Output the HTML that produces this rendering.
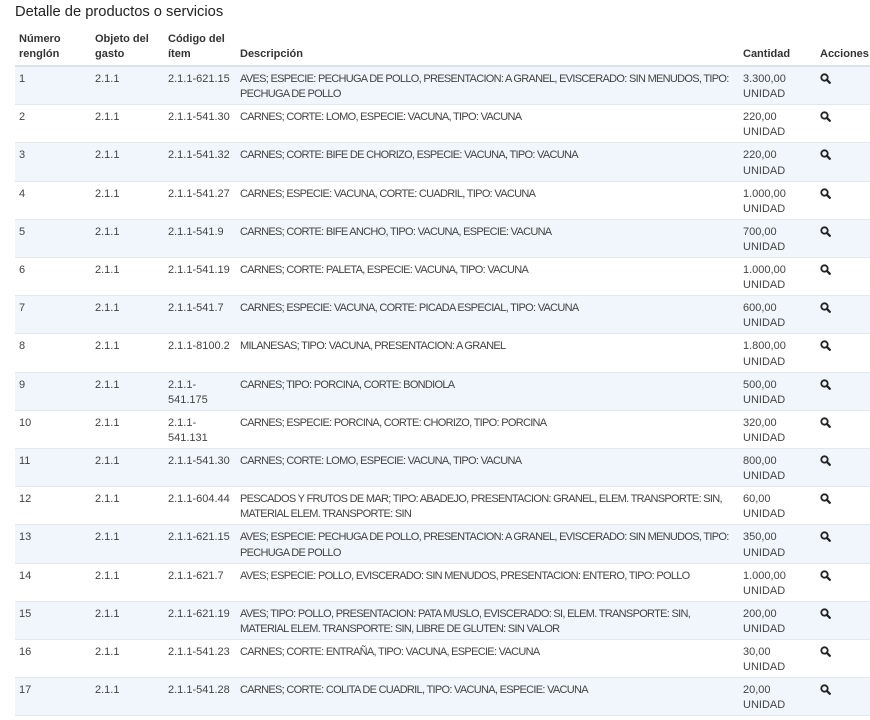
<!DOCTYPE html>
<html><head><meta charset="utf-8"><style>
body{margin:0;background:#fff;font-family:"Liberation Sans",sans-serif;color:#333;width:870px;height:720px;overflow:hidden;position:relative}
h1{position:absolute;left:15px;top:4px;margin:0;font-size:14.7px;font-weight:normal;color:#222}
.hd{position:absolute;top:32px;font-size:11px;font-weight:bold;line-height:15px;color:#333}
.hl{position:absolute;left:15px;width:855px;top:65px;height:2px;background:#dde3ea}
.r{position:absolute;left:15px;width:855px;height:38.2px;box-sizing:border-box;border-bottom:1px solid #e3e8ee;font-size:11px;line-height:15.3px;color:#444}
.r.o{background:#f0f6fb}
.r div{position:absolute;top:5px;white-space:nowrap}
.c1{left:4px}.c2{left:80px}.c3{left:153px}.c4{left:225px;letter-spacing:-0.7px}.c5{left:728px}.c6{left:805px;top:6px!important}
</style></head><body>
<h1>Detalle de productos o servicios</h1>
<div class="hd" style="left:19px">Número<br>renglón</div>
<div class="hd" style="left:95px">Objeto del<br>gasto</div>
<div class="hd" style="left:168px">Código del<br>ítem</div>
<div class="hd" style="left:240px;top:47px">Descripción</div>
<div class="hd" style="left:743px;top:47px">Cantidad</div>
<div class="hd" style="left:820px;top:47px">Acciones</div>
<div class="hl"></div>
<div id="rows"></div>
<script>
var d=[
["1","2.1.1-621.15","AVES; ESPECIE: PECHUGA DE POLLO, PRESENTACION: A GRANEL, EVISCERADO: SIN MENUDOS, TIPO:<br>PECHUGA DE POLLO","3.300,00"],
["2","2.1.1-541.30","CARNES; CORTE: LOMO, ESPECIE: VACUNA, TIPO: VACUNA","220,00"],
["3","2.1.1-541.32","CARNES; CORTE: BIFE DE CHORIZO, ESPECIE: VACUNA, TIPO: VACUNA","220,00"],
["4","2.1.1-541.27","CARNES; ESPECIE: VACUNA, CORTE: CUADRIL, TIPO: VACUNA","1.000,00"],
["5","2.1.1-541.9","CARNES; CORTE: BIFE ANCHO, TIPO: VACUNA, ESPECIE: VACUNA","700,00"],
["6","2.1.1-541.19","CARNES; CORTE: PALETA, ESPECIE: VACUNA, TIPO: VACUNA","1.000,00"],
["7","2.1.1-541.7","CARNES; ESPECIE: VACUNA, CORTE: PICADA ESPECIAL, TIPO: VACUNA","600,00"],
["8","2.1.1-8100.2","MILANESAS; TIPO: VACUNA, PRESENTACION: A GRANEL","1.800,00"],
["9","2.1.1-<br>541.175","CARNES; TIPO: PORCINA, CORTE: BONDIOLA","500,00"],
["10","2.1.1-<br>541.131","CARNES; ESPECIE: PORCINA, CORTE: CHORIZO, TIPO: PORCINA","320,00"],
["11","2.1.1-541.30","CARNES; CORTE: LOMO, ESPECIE: VACUNA, TIPO: VACUNA","800,00"],
["12","2.1.1-604.44","PESCADOS Y FRUTOS DE MAR; TIPO: ABADEJO, PRESENTACION: GRANEL, ELEM. TRANSPORTE: SIN,<br>MATERIAL ELEM. TRANSPORTE: SIN","60,00"],
["13","2.1.1-621.15","AVES; ESPECIE: PECHUGA DE POLLO, PRESENTACION: A GRANEL, EVISCERADO: SIN MENUDOS, TIPO:<br>PECHUGA DE POLLO","350,00"],
["14","2.1.1-621.7","AVES; ESPECIE: POLLO, EVISCERADO: SIN MENUDOS, PRESENTACION: ENTERO, TIPO: POLLO","1.000,00"],
["15","2.1.1-621.19","AVES; TIPO: POLLO, PRESENTACION: PATA MUSLO, EVISCERADO: SI, ELEM. TRANSPORTE: SIN,<br>MATERIAL ELEM. TRANSPORTE: SIN, LIBRE DE GLUTEN: SIN VALOR","200,00"],
["16","2.1.1-541.23","CARNES; CORTE: ENTRAÑA, TIPO: VACUNA, ESPECIE: VACUNA","30,00"],
["17","2.1.1-541.28","CARNES; CORTE: COLITA DE CUADRIL, TIPO: VACUNA, ESPECIE: VACUNA","20,00"]];
var ic='<svg width="11" height="11" viewBox="0 0 11 11"><circle cx="4.5" cy="4.5" r="3.2" fill="none" stroke="#222" stroke-width="1.8"/><path d="M6.8 6.8L9.8 9.8" stroke="#222" stroke-width="2.2" stroke-linecap="round"/></svg>';
var h='';d.forEach(function(r,i){h+='<div class="r'+(i%2==0?' o':'')+'" style="top:'+(67+i*38.2)+'px"><div class="c1">'+r[0]+'</div><div class="c2">2.1.1</div><div class="c3">'+r[1]+'</div><div class="c4">'+r[2]+'</div><div class="c5">'+r[3]+'<br>UNIDAD</div><div class="c6">'+ic+'</div></div>'});
document.getElementById('rows').innerHTML=h;
</script>
</body></html>
